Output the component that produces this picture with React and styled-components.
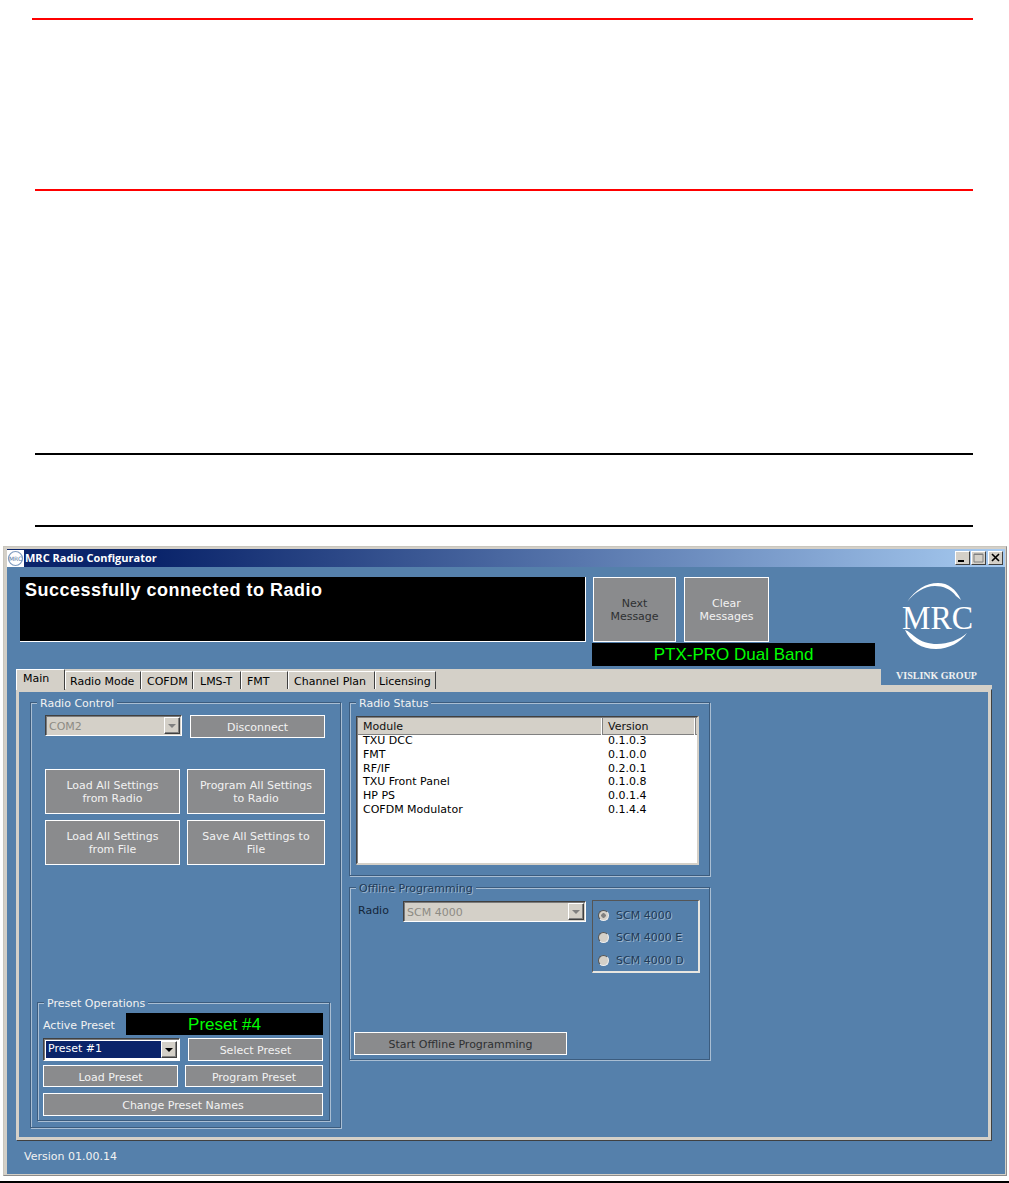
import React from 'react';
import styled, { createGlobalStyle } from 'styled-components';

const BLUE = '#5580ab';
const GREY = '#d4d0c8';

const Global = createGlobalStyle`
  html, body { margin: 0; padding: 0; background: #fff; }
  body { font-family: "DejaVu Sans", Verdana, sans-serif; font-size: 11px; }
`;

const Page = styled.div`
  width: 1009px;
  height: 1183px;
  padding-top: 18px;
  box-sizing: border-box;
  overflow: hidden;
`;

const Rule = styled.div`
  height: 2px;
  background: ${p => p.$color};
  margin: ${p => p.$top}px ${p => p.$right ?? 36}px 0 ${p => p.$left}px;
`;

const Window = styled.div`
  width: 1004px;
  height: 630px;
  box-sizing: border-box;
  margin: 19px 0 0 3px;
  padding: 2px 1px 1px 3px;
  background: ${GREY};
  border: 1px solid #c9c6be;
  border-right-color: #8c8c8c;
  border-bottom-color: #8c8c8c;
  display: flex;
  flex-direction: column;
`;

const TitleBar = styled.div`
  height: 18px;
  flex: none;
  display: flex;
  align-items: center;
  background: linear-gradient(90deg, #0a246a 0, #0a246a 15%, #a6caf0 100%);
`;

const TitleIcon = styled.svg`
  width: 17px;
  height: 17px;
  flex: none;
  background: #fff;
`;

const TitleText = styled.span`
  margin: 0 0 2px 1px;
  color: #fff;
  font: bold 11px "Open Sans", sans-serif;
`;

const Controls = styled.div`
  margin-left: auto;
  margin-right: 2px;
  display: flex;
`;

const Control = styled.button`
  width: 15px;
  height: 14px;
  margin-left: ${p => p.$gap || 1}px;
  padding: 0;
  background: ${GREY};
  border: 1px solid;
  border-color: #fff #404040 #404040 #fff;
  display: flex;
  align-items: center;
  justify-content: center;
  svg { display: block; }
`;

const Client = styled.div`
  flex: 1;
  position: relative;
  background: ${BLUE};
  padding: 0 13px 0 9px;
  display: flex;
  flex-direction: column;
`;

const Header = styled.div`
  height: 92px;
  padding: 10px 0 0 4px;
  flex: none;
`;

const MessageRow = styled.div`
  display: flex;
  height: 65px;
`;

const MessageBox = styled.div`
  width: 566px;
  box-sizing: border-box;
  margin-right: 7px;
  padding: 2px 5px;
  background: #000;
  color: #fff;
  font: bold 18px "Liberation Sans", Arial, sans-serif;
  letter-spacing: 0.5px;
  line-height: 22px;
  border-right: 1px solid #fff;
  border-bottom: 1px solid #fff;
`;

const Button = styled.button`
  box-sizing: border-box;
  width: ${p => p.$w ? `${p.$w}px` : '100%'};
  height: ${p => p.$h ? `${p.$h}px` : '100%'};
  margin: 0;
  padding: ${p => p.$h ? 2 : 0}px 2px 0;
  flex: none;
  background: #8a8b8d;
  border: 1px solid #fff;
  border-radius: 0;
  color: ${p => p.$dark ? '#2e3032' : '#f2f2f2'};
  font: 11px/13px "DejaVu Sans", Verdana, sans-serif;
  text-align: center;
`;

const Gap = styled.div`
  width: 8px;
  flex: none;
`;

const Readout = styled.div`
  box-sizing: border-box;
  width: ${p => p.$w}px;
  height: ${p => p.$h}px;
  margin-left: ${p => p.$left || 0}px;
  margin-top: ${p => p.$top || 0}px;
  background: #000;
  color: #00ff00;
  font: ${p => p.$size}px/${p => p.$h + (p.$drop || 0)}px "Liberation Sans", Arial, sans-serif;
  text-align: center;
`;

const TabStrip = styled.div`
  height: 20px;
  flex: none;
  background: ${GREY};
  display: flex;
  align-items: flex-end;
  position: relative;
  z-index: 1;
`;

const Tab = styled.div`
  box-sizing: border-box;
  width: ${p => p.$w}px;
  height: ${p => p.$active ? 21 : 18}px;
  margin-bottom: ${p => p.$active ? -1 : 0}px;
  padding-left: ${p => p.$pad}px;
  background: ${GREY};
  color: #000;
  line-height: ${p => p.$active ? 18 : 19}px;
  border-top: 1px solid #fff;
  border-left: 1px solid #fff;
  border-right: 1px solid #404040;
`;

const Panel = styled.div`
  width: 975px;
  height: 451px;
  flex: none;
  box-sizing: border-box;
  border: 3px solid ${GREY};
  box-shadow: 1px 1px 0 #404040;
  padding: 10px 0 0 11px;
  display: grid;
  grid-template-columns: 311px 361px;
  column-gap: 8px;
  grid-template-rows: 426px;
`;

const Group = styled.div`
  position: relative;
  box-sizing: border-box;
  height: ${p => p.$h}px;
  width: ${p => p.$w ? `${p.$w}px` : 'auto'};
  margin-top: ${p => p.$top || 0}px;
  border: 1px solid #3c5c7e;
  box-shadow: 1px 1px 0 #a9bed3, inset 1px 1px 0 #a9bed3;
  padding: ${p => p.$pad};
  display: flex;
  flex-direction: column;
`;

const Legend = styled.span`
  position: absolute;
  top: -6px;
  left: 6px;
  padding: 0 3px;
  line-height: 13px;
  background: ${BLUE};
  color: ${p => p.$muted ? '#1f3a57' : '#f2f2f2'};
  text-shadow: ${p => p.$muted ? '1px 1px 0 #9db5cc' : 'none'};
  white-space: nowrap;
`;

const Row = styled.div`
  display: flex;
  align-items: flex-start;
  gap: ${p => p.$gap || 0}px;
  margin: ${p => p.$margin || 0};
`;

const Combo = styled.div`
  box-sizing: border-box;
  width: ${p => p.$w}px;
  height: ${p => p.$h || 21}px;
  flex: none;
  display: flex;
  padding: ${p => p.$open ? '2px' : '0'};
  background: ${p => p.$open ? '#fff' : GREY};
  border: 1px solid;
  border-color: #404040 #fff #fff #404040;
  box-shadow: inset 1px 1px 0 #7b7b7b;
`;

const ComboValue = styled.span`
  flex: 1;
  padding-left: ${p => p.$open ? 2 : 3}px;
  line-height: ${p => p.$open ? 15 : 21}px;
  background: ${p => p.$open ? '#0a246a' : 'transparent'};
  color: ${p => p.$open ? '#fff' : '#8d8b84'};
`;

const ComboArrow = styled.span`
  width: 16px;
  flex: none;
  margin: ${p => p.$open ? '0' : '1px 1px 1px 0'};
  box-sizing: border-box;
  background: ${GREY};
  border: 1px solid;
  border-color: #fff #404040 #404040 #fff;
  box-shadow: inset -1px -1px 0 #808080;
  display: flex;
  align-items: center;
  justify-content: center;
  &::after {
    content: '';
    border: 4px solid transparent;
    border-bottom-width: 0;
    border-top: 4px solid ${p => p.$open ? '#000' : '#808080'};
  }
`;

const SettingsGrid = styled.div`
  display: grid;
  grid-template-columns: 135px 138px;
  grid-template-rows: 45px 45px;
  gap: 6px 7px;
  margin: 31px 0 0 8px;
`;

const PresetLabel = styled.span`
  width: 83px;
  height: 22px;
  flex: none;
  color: #f2f2f2;
  line-height: 26px;
`;

const StatusList = styled.div`
  box-sizing: border-box;
  height: 149px;
  width: 343px;
  background: #fff;
  border: 1px solid;
  border-width: 1px 2px 2px 1px;
  border-color: #404040 ${GREY} ${GREY} #404040;
  box-shadow: inset 1px 1px 0 #808080;
`;

const ListHead = styled.div`
  display: grid;
  grid-template-columns: 245px 93px 1fr;
  height: 16px;
  margin: 1px 0 0 1px;
  background: ${GREY};
  border-bottom: 1px solid #808080;
  line-height: 17px;
  color: #111;
`;

const HeadCell = styled.span`
  padding-left: 5px;
  border-right: 1px solid #808080;
  box-shadow: inset -1px 0 0 #fff;
`;

const ListRow = styled.div`
  display: grid;
  grid-template-columns: 245px 1fr;
  height: 13.8px;
  line-height: 12px;
  margin-left: 1px;
  color: #000;
`;

const ListCell = styled.span`
  padding-left: 5px;
`;

const FieldLabel = styled.span`
  width: 45px;
  flex: none;
  line-height: 22px;
  color: #14263a;
`;

const ComboSlot = styled.div`
  margin: 1px 6px 0 0;
`;

const RadioBox = styled.div`
  box-sizing: border-box;
  width: 108px;
  height: 73px;
  padding: 7px 0 0 5px;
  border: 1px solid;
  border-width: 1px 2px 2px 1px;
  border-color: #555 #e8e6e0 #e8e6e0 #555;
  display: flex;
  flex-direction: column;
  gap: 8.5px;
`;

const RadioRow = styled.div`
  display: flex;
  align-items: center;
  height: 14px;
  color: #1f3a57;
  text-shadow: 1px 1px 0 #9db5cc;
`;

const RadioDot = styled.span`
  box-sizing: border-box;
  width: 11px;
  height: 11px;
  margin-right: 7px;
  border-radius: 50%;
  background: ${p => p.$on
    ? 'radial-gradient(circle, #808080 0 2px, #d4d0c8 2.5px)'
    : GREY};
  border: 1px solid;
  border-color: #555 #eee #eee #555;
`;

const Bottom = styled.div`
  margin-top: auto;
`;

const Footer = styled.div`
  padding: 10px 0 0 8px;
  color: #f2f2f2;
  line-height: 14px;
`;

const LogoBlock = styled.div`
  position: absolute;
  top: 2px;
  right: 13px;
  width: 111px;
  height: 116px;
  background: ${BLUE};
  z-index: 2;
  svg { display: block; }
`;

const modules = [
  ['TXU DCC', '0.1.0.3'],
  ['FMT', '0.1.0.0'],
  ['RF/IF', '0.2.0.1'],
  ['TXU Front Panel', '0.1.0.8'],
  ['HP PS', '0.0.1.4'],
  ['COFDM Modulator', '0.1.4.4'],
];

const tabs = [
  ['Main', 49, 6, true],
  ['Radio Mode', 76, 4],
  ['COFDM', 52, 5],
  ['LMS-T', 48, 6],
  ['FMT', 47, 5],
  ['Channel Plan', 87, 5],
  ['Licensing', 61, 3],
];

function MrcLogo() {
  return (
    <svg width="111" height="116" viewBox="0 0 111 116">
      <path d="M26 33 C34 21 45 14 57 14 C67 14 75 20 80 31 L75 27 C70 20 62 17 54 17 C43 17 33 24 26 33 Z" fill="#fff" />
      <path d="M24 61 C28 62 30 65 33 67 C40 73 48 75 56 75 C67 75 78 71 86 64 C80 73 68 80 55 80 C41 80 29 73 24 61 Z" fill="#fff" />
      <text x="21" y="60" fill="#fff" fontFamily="Liberation Serif, serif" fontSize="34" textLength="71" lengthAdjust="spacingAndGlyphs">MRC</text>
      <text x="15" y="110" fill="#f0f0f0" fontFamily="Liberation Serif, serif" fontSize="11" fontWeight="bold" textLength="81" lengthAdjust="spacingAndGlyphs">VISLINK GROUP</text>
    </svg>
  );
}

export default function App() {
  return (
    <Page>
      <Global />
      <Rule $color="#ff0000" $left={32} $top={0} />
      <Rule $color="#ff0000" $left={35} $top={169} />
      <Rule $color="#000" $left={35} $top={262} />
      <Rule $color="#000" $left={35} $top={70} />
      <Window>
        <TitleBar>
          <TitleIcon viewBox="0 0 17 17">
            <circle cx="8.5" cy="8.5" r="7" fill="none" stroke="#7f9cc0" strokeWidth="1.2" />
            <text x="8.5" y="11" textAnchor="middle" fontSize="6" fill="#5b7ba3" fontFamily="DejaVu Sans, sans-serif">MRC</text>
          </TitleIcon>
          <TitleText>MRC Radio Configurator</TitleText>
          <Controls>
            <Control>
              <svg width="13" height="12" viewBox="0 0 13 12"><rect x="2" y="8" width="6" height="2" fill="#000" /></svg>
            </Control>
            <Control>
              <svg width="13" height="12" viewBox="0 0 13 12"><path d="M2 2h9v8H2z M2 2.5h9" fill="none" stroke="#808080" /></svg>
            </Control>
            <Control $gap={2}>
              <svg width="13" height="12" viewBox="0 0 13 12"><path d="M3 2l7 7M10 2l-7 7" stroke="#000" strokeWidth="1.6" /></svg>
            </Control>
          </Controls>
        </TitleBar>
        <Client>
          <Header>
            <MessageRow>
              <MessageBox>Successfully connected to Radio</MessageBox>
              <Button $w={83} $dark>Next<br />Message</Button>
              <Gap />
              <Button $w={85}>Clear<br />Messages</Button>
            </MessageRow>
            <Readout $w={283} $h={23} $left={572} $top={1} $size={17}>PTX-PRO Dual Band</Readout>
          </Header>
          <LogoBlock><MrcLogo /></LogoBlock>
          <TabStrip>
            {tabs.map(([name, w, pad, active]) => (
              <Tab key={name} $w={w} $pad={pad} $active={active}>{name}</Tab>
            ))}
          </TabStrip>
          <Panel>
            <Group $h={426} $pad="12px 0 6px 6px">
              <Legend>Radio Control</Legend>
              <Row $gap={8} $margin="0 0 0 8px">
                <Combo $w={137}>
                  <ComboValue>COM2</ComboValue>
                  <ComboArrow />
                </Combo>
                <Button $w={135} $h={23}>Disconnect</Button>
              </Row>
              <SettingsGrid>
                <Button>Load All Settings<br />from Radio</Button>
                <Button>Program All Settings<br />to Radio</Button>
                <Button>Load All Settings<br />from File</Button>
                <Button>Save All Settings to<br />File</Button>
              </SettingsGrid>
              <Bottom>
                <Group $h={119} $w={293} $pad="10px 6px 0 5px">
                  <Legend>Preset Operations</Legend>
                  <Row>
                    <PresetLabel>Active Preset</PresetLabel>
                    <Readout $w={197} $h={22} $size={17} $drop={2}>Preset #4</Readout>
                  </Row>
                  <Row $gap={8} $margin="3px 0 0">
                    <Combo $w={137} $h={23} $open>
                      <ComboValue $open>Preset #1</ComboValue>
                      <ComboArrow $open />
                    </Combo>
                    <Button $w={135} $h={23}>Select Preset</Button>
                  </Row>
                  <Row $gap={7} $margin="4px 0 0">
                    <Button $w={135} $h={22}>Load Preset</Button>
                    <Button $w={138} $h={22}>Program Preset</Button>
                  </Row>
                  <Row $margin="6px 0 0">
                    <Button $w={280} $h={23}>Change Preset Names</Button>
                  </Row>
                </Group>
              </Bottom>
            </Group>
            <div>
              <Group $h={174} $pad="13px 0 0 6px">
                <Legend>Radio Status</Legend>
                <StatusList>
                  <ListHead>
                    <HeadCell>Module</HeadCell>
                    <HeadCell>Version</HeadCell>
                    <span />
                  </ListHead>
                  {modules.map(([name, version]) => (
                    <ListRow key={name}>
                      <ListCell>{name}</ListCell>
                      <ListCell>{version}</ListCell>
                    </ListRow>
                  ))}
                </StatusList>
              </Group>
              <Group $h={173} $top={11} $pad="12px 0 4px 4px">
                <Legend $muted>Offline Programming</Legend>
                <Row $margin="0 0 0 4px">
                  <FieldLabel>Radio</FieldLabel>
                  <ComboSlot>
                    <Combo $w={183}>
                      <ComboValue>SCM 4000</ComboValue>
                      <ComboArrow />
                    </Combo>
                  </ComboSlot>
                  <RadioBox>
                    <RadioRow><RadioDot $on />SCM 4000</RadioRow>
                    <RadioRow><RadioDot />SCM 4000 E</RadioRow>
                    <RadioRow><RadioDot />SCM 4000 D</RadioRow>
                  </RadioBox>
                </Row>
                <Bottom>
                  <Button $w={213} $h={23} $dark>Start Offline Programming</Button>
                </Bottom>
              </Group>
            </div>
          </Panel>
          <Footer>Version 01.00.14</Footer>
        </Client>
      </Window>
      <Rule $color="#000" $left={0} $top={5} $right={0} />
    </Page>
  );
}
